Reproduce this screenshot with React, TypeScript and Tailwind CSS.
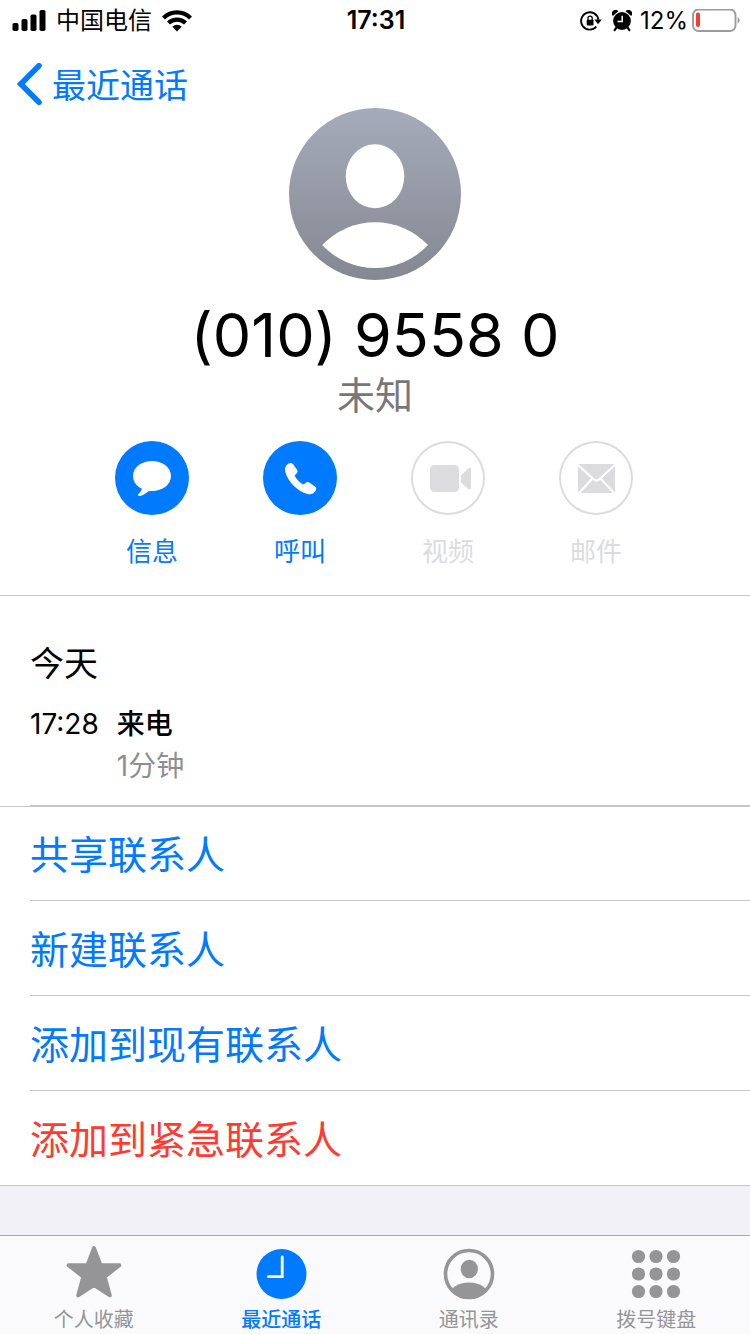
import type { ReactNode } from "react";

function SignalIcon() {
  return (
    <svg width="34" height="22" viewBox="0 0 34 22" aria-hidden="true">
      <rect x="0.500" y="13" width="6" height="8" rx="1.8" />
      <rect x="9.500" y="9" width="6" height="12" rx="1.8" />
      <rect x="18.500" y="4.500" width="6" height="16.500" rx="1.8" />
      <rect x="27.500" y="0" width="6" height="21" rx="1.8" />
    </svg>
  );
}

function WifiIcon() {
  return (
    <svg width="30" height="22" viewBox="0 0 30 22" aria-hidden="true">
      <g fill="none" stroke="#000" strokeWidth="4.2">
        <path d="M1.500 8A19.200 19.200 0 0 1 28.500 8" />
        <path d="M6.500 13A12.200 12.200 0 0 1 23.500 13" />
      </g>
      <path d="M10.300 16.800A6.700 6.700 0 0 1 19.700 16.800L15 21.400Z" />
    </svg>
  );
}

function RotationLockIcon() {
  return (
    <svg width="22" height="20" viewBox="0 0 22 20" aria-hidden="true">
      <path
        d="M16.300 15.700A8.700 8.700 0 1 1 18.400 8.600"
        fill="none"
        stroke="#000"
        strokeWidth="1.9"
      />
      <path d="M14.400 8.600H21.700L18.100 13.200Z" />
      <rect x="6.700" y="8.800" width="6.800" height="5.600" rx="0.800" />
      <path d="M8 9V7.300A2.100 2.100 0 0 1 12.200 7.300V9" fill="none" stroke="#000" strokeWidth="1.3" />
    </svg>
  );
}

function AlarmIcon() {
  return (
    <svg width="20" height="22" viewBox="0 0 20 22" aria-hidden="true">
      <circle cx="10" cy="11" r="8.900" />
      <path d="M0.800 6A3.400 3.400 0 0 1 6.400 1.300Z" />
      <path d="M19.200 6A3.400 3.400 0 0 0 13.600 1.300Z" />
      <path d="M4.600 17.300L2.600 20.200M15.400 17.300L17.400 20.200" stroke="#000" strokeWidth="2.200" strokeLinecap="round" />
      <path d="M10.200 5.800V11.400H5.500" fill="none" stroke="#fff" strokeWidth="1.500" />
    </svg>
  );
}

function BatteryIcon() {
  return (
    <svg width="48" height="24" viewBox="0 0 48 24" aria-hidden="true">
      <rect x="1" y="0.500" width="42.500" height="21.500" rx="5.500" fill="none" stroke="#9b9b9b" strokeWidth="1.900" />
      <rect x="4" y="3.500" width="4" height="14.500" rx="1.700" fill="#ff3b30" />
      <path d="M45.600 8Q47.600 8.800 47.600 11.300T45.600 14.700Z" fill="#9b9b9b" />
    </svg>
  );
}

function BackIcon() {
  return (
    <svg width="26" height="44" viewBox="0 0 26 44" aria-hidden="true">
      <path
        d="M23 2.800L4.800 21L23 39.200"
        fill="none"
        stroke="currentColor"
        strokeWidth="5.600"
        strokeLinecap="round"
        strokeLinejoin="miter"
      />
    </svg>
  );
}

function Avatar() {
  return (
    <svg width="172" height="172" viewBox="0 0 172 172" role="img" aria-label="头像">
      <defs>
        <linearGradient id="avatar" x1="0" y1="0" x2="0" y2="1">
          <stop offset="0" stopColor="#a5abba" />
          <stop offset="1" stopColor="#858891" />
        </linearGradient>
      </defs>
      <circle cx="86" cy="86" r="86" fill="url(#avatar)" />
      <ellipse cx="86" cy="68.300" rx="29.300" ry="32" fill="#fff" />
      <path d="M33.200 137A73 73 0 0 1 139 137A72.500 72.500 0 0 1 33.200 137Z" fill="#fff" />
    </svg>
  );
}

function MessageIcon() {
  return (
    <svg width="74" height="74" viewBox="0 0 74 74" fill="currentColor" aria-hidden="true">
      <path d="M37 20C47.700 20 56 26.500 56 35S47.700 50 37 50C35.700 50 34.500 50.100 33.400 50.300C30.500 52.800 27.500 54.900 24.300 55C22.700 55 22.700 53.600 23.700 52.800C25.400 51.200 26.500 49.700 26.900 47.800C21.400 45.200 18 40.500 18 35C18 26.500 26.300 20 37 20Z" />
    </svg>
  );
}

function PhoneIcon() {
  return (
    <svg width="74" height="74" viewBox="0 0 74 74" fill="currentColor" aria-hidden="true">
      <path d="M25.500 22.500C27.600 21.400 29.300 22 30.300 23.500L33.900 28.600C35 30.100 34.700 31.400 33.500 32.500L32.300 33.700C31.600 34.400 31.700 35 32.200 35.800C34 38.600 36.400 41.100 39.300 43C40.100 43.600 40.800 43.500 41.400 42.900L42.600 41.900C43.800 40.800 45.200 40.700 46.600 41.700L51.700 45.200C53.400 46.400 53.700 48.100 52.600 49.700C50.700 52.500 48 54 44.600 53C34.200 50 24.600 40.400 22.200 30.400C21.500 27.100 22.700 24 25.500 22.500Z" />
    </svg>
  );
}

function VideoIcon() {
  return (
    <svg width="74" height="74" viewBox="0 0 74 74" fill="currentColor" aria-hidden="true">
      <rect x="19" y="24" width="29" height="27" rx="4.500" />
      <path d="M50 34.500L57.200 27.500Q60 25.500 60 28.500V47Q60 50 57.200 48L50 41.500Z" />
    </svg>
  );
}

function MailIcon() {
  return (
    <svg width="74" height="74" viewBox="0 0 74 74" aria-hidden="true">
      <rect x="19" y="23" width="37" height="29" rx="1.500" fill="currentColor" />
      <path
        d="M19 24L35 38.500Q37.500 40.700 40 38.500L56 24M19.500 52.500L33 38M55.500 52.500L42 38"
        fill="none"
        stroke="#fff"
        strokeWidth="2.200"
      />
    </svg>
  );
}

function StarIcon() {
  return (
    <svg width="56" height="56" viewBox="0 0 56 56" aria-hidden="true">
      <path
        d="M28 4L34.600 21.200H53.500L38.800 32.700L43.900 51.500L28 41.200L12.100 51.500L17.200 32.700L2.500 21.200H21.400Z"
        fill="currentColor"
        stroke="currentColor"
        strokeWidth="3.800"
        strokeLinejoin="round"
      />
    </svg>
  );
}

function ClockIcon() {
  return (
    <svg width="56" height="56" viewBox="0 0 56 56" aria-hidden="true">
      <circle cx="28.500" cy="30" r="25" fill="currentColor" />
      <path d="M29.200 13V32.700H15.500" fill="none" stroke="#fff" strokeWidth="2.800" strokeLinecap="round" />
    </svg>
  );
}

function ContactsIcon() {
  return (
    <svg width="56" height="56" viewBox="0 0 56 56" aria-hidden="true">
      <defs>
        <clipPath id="contact-ring">
          <circle cx="28" cy="30" r="24" />
        </clipPath>
      </defs>
      <circle cx="28" cy="30" r="23.500" fill="none" stroke="currentColor" strokeWidth="3.600" />
      <ellipse cx="28.300" cy="25" rx="8.600" ry="9.300" fill="currentColor" />
      <ellipse cx="28" cy="51" rx="19.500" ry="12.400" fill="currentColor" clipPath="url(#contact-ring)" />
    </svg>
  );
}

function KeypadIcon() {
  const steps = [0, 1, 2];
  return (
    <svg width="56" height="56" viewBox="0 0 56 56" fill="currentColor" aria-hidden="true">
      {steps.map((row) =>
        steps.map((col) => (
          <circle key={`${row}-${col}`} cx={10.5 + col * 17.5} cy={12.5 + row * 17.5} r="6.600" />
        ))
      )}
    </svg>
  );
}

function Action({ icon, label, enabled }: { icon: ReactNode; label: string; enabled?: boolean }) {
  return (
    <button
      type="button"
      disabled={!enabled}
      className={`flex w-[148px] flex-col items-center gap-4 ${enabled ? "text-[#007aff]" : "text-[#dcdcde]"}`}
    >
      <span
        className={`flex size-[74px] items-center justify-center rounded-full ${
          enabled ? "bg-[#007aff] text-white" : "ring-2 ring-[#dcdcde] ring-inset"
        }`}
      >
        {icon}
      </span>
      <span className="text-[26px] leading-[42px]">{label}</span>
    </button>
  );
}

const links = [
  { label: "共享联系人", danger: false },
  { label: "新建联系人", danger: false },
  { label: "添加到现有联系人", danger: false },
  { label: "添加到紧急联系人", danger: true },
];

const tabs = [
  { label: "个人收藏", icon: <StarIcon />, active: false },
  { label: "最近通话", icon: <ClockIcon />, active: true },
  { label: "通讯录", icon: <ContactsIcon />, active: false },
  { label: "拨号键盘", icon: <KeypadIcon />, active: false },
];

export default function App() {
  return (
    <div className="flex min-h-screen flex-col bg-white font-['Inter','Noto_Sans_CJK_SC',sans-serif] text-black">
      <div className="grid h-[42px] grid-cols-[1fr_auto_1fr] items-center pr-2.5 pl-3 text-2xl">
        <div className="flex items-center gap-2.5">
          <SignalIcon />
          <span>中国电信</span>
          <WifiIcon />
        </div>
        <time className="text-[25px] font-semibold">17:31</time>
        <div className="flex items-center justify-end">
          <RotationLockIcon />
          <span className="mr-2 ml-2.5">
            <AlarmIcon />
          </span>
          <span className="mr-1">12%</span>
          <BatteryIcon />
        </div>
      </div>

      <header className="flex h-[66px] items-start px-4 pt-5">
        <button type="button" className="flex items-center gap-2.5 text-[34px] leading-[44px] text-[#007aff]">
          <BackIcon />
          <span className="pt-0.5">最近通话</span>
        </button>
      </header>

      <main className="flex flex-1 flex-col">
        <section className="flex flex-col items-center border-b border-[#c6c6c8] pb-[22px]">
          <Avatar />
          <h1 className="mt-[15px] text-[61px] leading-20 [font-feature-settings:'calt'_0]">(010) 9558 0</h1>
          <p className="text-[38px] leading-10 text-[#77777a]">未知</p>
          <div className="mt-[26px] flex pr-0.5">
            <Action icon={<MessageIcon />} label="信息" enabled />
            <Action icon={<PhoneIcon />} label="呼叫" enabled />
            <Action icon={<VideoIcon />} label="视频" />
            <Action icon={<MailIcon />} label="邮件" />
          </div>
        </section>

        <section className="border-b border-[#c6c6c8] pl-[30px]">
          <div className="border-b border-[#c6c6c8] pt-[45px] pb-[18px]">
            <h2 className="text-[34px] leading-[46px]">今天</h2>
            <div className="mt-4 flex gap-[18px] text-[28px] leading-[42px]">
              <time>17:28</time>
              <div>
                <p className="font-medium">来电</p>
                <p className="text-[#8e8e93]">1分钟</p>
              </div>
            </div>
          </div>
        </section>

        <ul className="-mt-px border-b border-[#c6c6c8]">
          {links.map((link, i) => (
            <li key={link.label} className="pl-[30px]">
              <button
                type="button"
                className={`block w-full pt-1 text-left text-[39px] leading-[90px] ${
                  link.danger ? "text-[#ff3b30]" : "text-[#007aff]"
                } ${i < links.length - 1 ? "border-b border-[#c6c6c8]" : ""}`}
              >
                {link.label}
              </button>
            </li>
          ))}
        </ul>
        <div className="min-h-4 flex-1 bg-[#f2f1f7]" />
      </main>

      <nav className="grid grid-cols-4 border-t border-[#a5a5ab] bg-[#fafafc]">
        {tabs.map((tab) => (
          <a
            key={tab.label}
            href="#"
            aria-current={tab.active ? "page" : undefined}
            className={`flex h-[98px] flex-col items-center pt-2 text-xl ${
              tab.active ? "font-medium text-[#007aff]" : "text-[#959597]"
            }`}
          >
            {tab.icon}
            <span className="mt-1.5 leading-[28px]">{tab.label}</span>
          </a>
        ))}
      </nav>
    </div>
  );
}
